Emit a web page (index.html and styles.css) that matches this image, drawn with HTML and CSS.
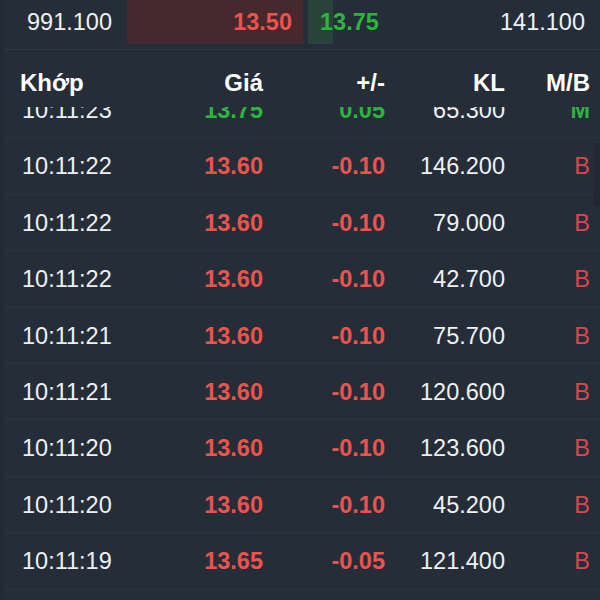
FILE: index.html
```html
<!DOCTYPE html>
<html lang="vi">
<head>
    <meta charset="UTF-8">
    <title>Khớp lệnh</title>
    <link rel="stylesheet" href="styles.css">
</head>
<body>
    <div class="panel">
        <div class="quote-bar">
            <div class="cell vol-left">991.100</div>
            <div class="cell bid">13.50</div>
            <div class="cell ask"><span class="bar" style="width: 25px"></span><span class="val">13.75</span></div>
            <div class="cell vol-right">141.100</div>
        </div>
        <div class="table-head">
            <span class="c-time">Khớp</span>
            <span class="c-price">Giá</span>
            <span class="c-chg">+/-</span>
            <span class="c-vol">KL</span>
            <span class="c-side">M/B</span>
        </div>
        <div class="list">
            <div class="rows">
                <div class="row up"><span class="c-time">10:11:23</span><span class="c-price">13.75</span><span class="c-chg">0.05</span><span class="c-vol">65.300</span><span class="c-side">M</span></div>
                <div class="row down"><span class="c-time">10:11:22</span><span class="c-price">13.60</span><span class="c-chg">-0.10</span><span class="c-vol">146.200</span><span class="c-side">B</span></div>
                <div class="row down"><span class="c-time">10:11:22</span><span class="c-price">13.60</span><span class="c-chg">-0.10</span><span class="c-vol">79.000</span><span class="c-side">B</span></div>
                <div class="row down"><span class="c-time">10:11:22</span><span class="c-price">13.60</span><span class="c-chg">-0.10</span><span class="c-vol">42.700</span><span class="c-side">B</span></div>
                <div class="row down"><span class="c-time">10:11:21</span><span class="c-price">13.60</span><span class="c-chg">-0.10</span><span class="c-vol">75.700</span><span class="c-side">B</span></div>
                <div class="row down"><span class="c-time">10:11:21</span><span class="c-price">13.60</span><span class="c-chg">-0.10</span><span class="c-vol">120.600</span><span class="c-side">B</span></div>
                <div class="row down"><span class="c-time">10:11:20</span><span class="c-price">13.60</span><span class="c-chg">-0.10</span><span class="c-vol">123.600</span><span class="c-side">B</span></div>
                <div class="row down"><span class="c-time">10:11:20</span><span class="c-price">13.60</span><span class="c-chg">-0.10</span><span class="c-vol">45.200</span><span class="c-side">B</span></div>
                <div class="row down"><span class="c-time">10:11:19</span><span class="c-price">13.65</span><span class="c-chg">-0.05</span><span class="c-vol">121.400</span><span class="c-side">B</span></div>
            </div>
            <div class="scroll-thumb"></div>
        </div>
    </div>
</body>
</html>
```

FILE: styles.css
```css
html,
body {
    margin: 0;
    padding: 0;
    background: #252d39;
}

body {
    font-family: 'Liberation Sans', Arial, sans-serif;
    font-size: 23.5px;
    color: #eef0f2;
}

.panel {
    width: 600px;
    height: 600px;
    overflow: hidden;
    border-left: 4px solid #222a35;
    box-sizing: border-box;
}

.quote-bar {
    display: grid;
    grid-template-columns: 123px 176px 5px 99px 1fr;
    height: 44px;
    line-height: 44px;
    border-bottom: 1px solid #303947;
    padding-bottom: 5px;
}

.cell {
    position: relative;
}

.vol-left {
    padding-left: 23px;
}

.bid {
    background: #46282f;
    color: #ea544c;
    font-weight: bold;
    text-align: right;
    padding-right: 11px;
}

.ask {
    grid-column: 4;
    color: #2cb43c;
    font-weight: bold;
}

.ask .bar {
    position: absolute;
    left: 0;
    top: 0;
    bottom: 0;
    background: #28433a;
}

.ask .val {
    position: relative;
    padding-left: 12px;
}

.vol-right {
    text-align: right;
    padding-right: 15px;
}

.table-head,
.row {
    display: grid;
    grid-template-columns: 120px 123px 122px 120px 1fr;
    padding-left: 16px;
    padding-right: 10px;
}

.table-head {
    font-size: 24px;
    font-weight: bold;
    color: #ffffff;
    height: 57px;
    line-height: 27px;
    padding-top: 19px;
    box-sizing: border-box;
}

.c-price,
.c-chg,
.c-vol,
.c-side {
    text-align: right;
}

.list {
    position: relative;
    height: 493px;
    overflow: hidden;
}

.rows {
    margin-top: -25px;
}

.row {
    height: 56.4px;
    line-height: 56.4px;
    border-bottom: 1px solid #2b3441;
    box-sizing: border-box;
}

.row .c-time {
    padding-left: 2px;
}

.row.up .c-price,
.row.up .c-chg,
.row.up .c-side {
    color: #2cb43c;
    font-weight: bold;
}

.row.down .c-price,
.row.down .c-chg {
    color: #ea544c;
    font-weight: bold;
}

.row.down .c-side {
    color: #d8474c;
}

.scroll-thumb {
    position: absolute;
    right: 0;
    top: 36px;
    width: 7px;
    height: 64px;
    background: #212833;
}
```
